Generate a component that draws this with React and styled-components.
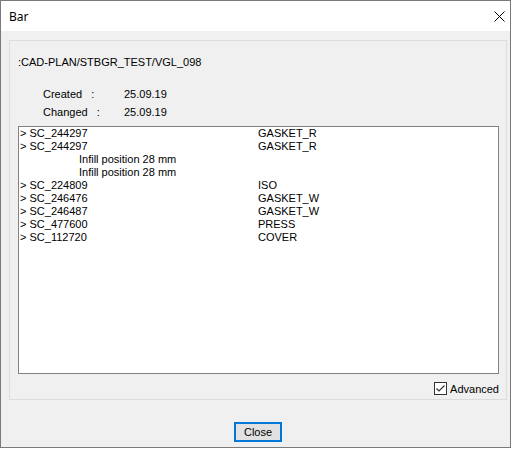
import React from "react";
import styled, { createGlobalStyle } from "styled-components";

const Global = createGlobalStyle`
  html, body {
    margin: 0;
    padding: 0;
    background: #ffffff;
  }
`;

const Window = styled.div`
  box-sizing: border-box;
  width: 511px;
  height: 448px;
  border: 1px solid #7a7a7a;
  display: flex;
  flex-direction: column;
  background: #f0f0f0;
  font-family: "Liberation Sans", Arial, sans-serif;
  font-size: 11px;
  color: #000000;
`;

const TitleBar = styled.div`
  height: 30px;
  background: #ffffff;
  display: flex;
  align-items: center;
  justify-content: space-between;
  padding-left: 8px;
`;

const Title = styled.span`
  font-family: "Noto Sans", "Open Sans", sans-serif;
  font-size: 12px;
`;

const CloseX = styled.div`
  width: 22px;
  height: 30px;
  display: flex;
  align-items: center;
  justify-content: center;
`;

const Body = styled.div`
  flex: 1;
  display: flex;
  flex-direction: column;
  padding: 9px 3px 0 8px;
`;

const Group = styled.div`
  box-sizing: border-box;
  height: 360px;
  border: 1px solid #dcdcdc;
  display: flex;
  flex-direction: column;
  padding: 0 7px 0 8px;
`;

const Path = styled.div`
  line-height: 13px;
  margin-top: 15px;
`;

const Meta = styled.div`
  display: flex;
  flex-direction: column;
  gap: 5px;
  margin-top: 19px;
  padding-left: 25px;
`;

const MetaRow = styled.div`
  display: flex;
  line-height: 13px;
`;

const MetaLabel = styled.span`
  width: 81px;
  white-space: pre;
`;

const List = styled.div`
  box-sizing: border-box;
  height: 248px;
  margin-top: 7px;
  border: 1px solid #828282;
  background: #ffffff;
  padding: 0 1px;
`;

const Row = styled.div`
  display: flex;
  line-height: 13px;
  white-space: pre;
  padding-left: ${(p) => (p.$sub ? "59px" : "0")};
`;

const Cell = styled.span`
  width: 238px;
`;

const CheckRow = styled.div`
  display: flex;
  justify-content: flex-end;
  align-items: center;
  gap: 3px;
  margin-top: 8px;
`;

const Box = styled.div`
  box-sizing: border-box;
  width: 13px;
  height: 13px;
  border: 1px solid #333333;
  background: #ffffff;
  display: flex;
  align-items: center;
  justify-content: center;
`;

const Footer = styled.div`
  flex: 1;
  display: flex;
  justify-content: center;
  align-items: flex-start;
  padding-top: 22px;
`;

const Button = styled.button`
  box-sizing: border-box;
  width: 48px;
  height: 20px;
  border: 2px solid #0078d7;
  background: #e1e1e1;
  font-family: "Liberation Sans", Arial, sans-serif;
  font-size: 11px;
  padding: 0;
  color: #000000;
`;

const rows = [
  { a: "> SC_244297", b: "GASKET_R" },
  { a: "> SC_244297", b: "GASKET_R" },
  { a: "Infill position 28 mm", sub: true },
  { a: "Infill position 28 mm", sub: true },
  { a: "> SC_224809", b: "ISO" },
  { a: "> SC_246476", b: "GASKET_W" },
  { a: "> SC_246487", b: "GASKET_W" },
  { a: "> SC_477600", b: "PRESS" },
  { a: "> SC_112720", b: "COVER" },
];

export default function App() {
  return (
    <>
      <Global />
      <Window>
        <TitleBar>
          <Title>Bar</Title>
          <CloseX>
            <svg width="11" height="11" viewBox="0 0 11 11">
              <path d="M0.5 0.5 L10.5 10.5 M10.5 0.5 L0.5 10.5" stroke="#000" strokeWidth="1" />
            </svg>
          </CloseX>
        </TitleBar>
        <Body>
          <Group>
            <Path>:CAD-PLAN/STBGR_TEST/VGL_098</Path>
            <Meta>
              <MetaRow>
                <MetaLabel>{"Created   :"}</MetaLabel>
                <span>25.09.19</span>
              </MetaRow>
              <MetaRow>
                <MetaLabel>{"Changed   :"}</MetaLabel>
                <span>25.09.19</span>
              </MetaRow>
            </Meta>
            <List>
              {rows.map((r, i) => (
                <Row key={i} $sub={r.sub}>
                  {r.sub ? r.a : <Cell>{r.a}</Cell>}
                  {r.b && <span>{r.b}</span>}
                </Row>
              ))}
            </List>
            <CheckRow>
              <Box>
                <svg width="11" height="11" viewBox="0 0 11 11">
                  <path d="M1.5 5.5 L4 8 L9.5 2.5" stroke="#333" strokeWidth="1.2" fill="none" />
                </svg>
              </Box>
              <span>Advanced</span>
            </CheckRow>
          </Group>
          <Footer>
            <Button>Close</Button>
          </Footer>
        </Body>
      </Window>
    </>
  );
}
